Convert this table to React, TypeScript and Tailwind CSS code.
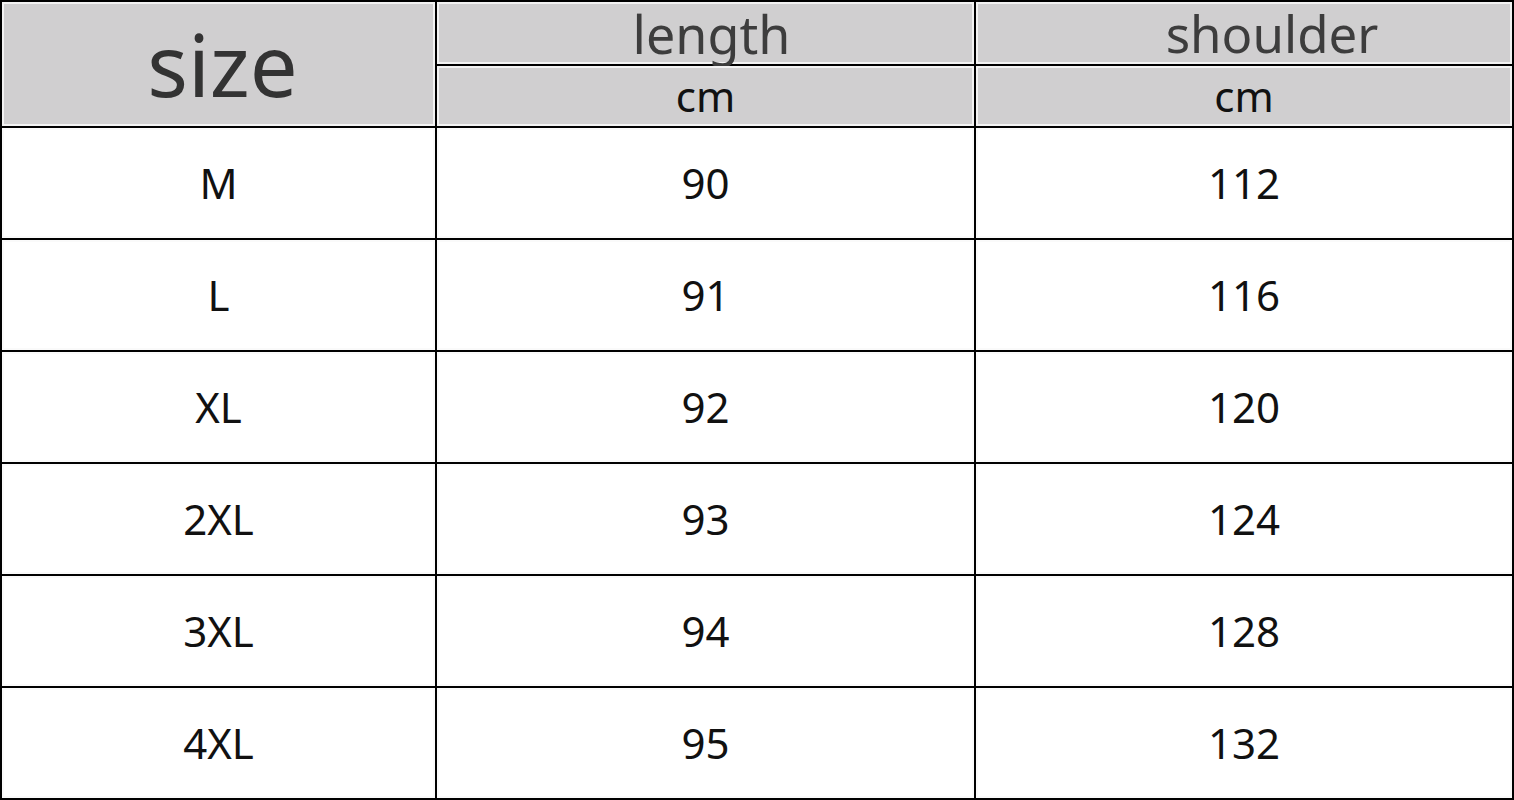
import { Fragment } from "react";

const rows = [
  { size: "M", length: "90", shoulder: "112" },
  { size: "L", length: "91", shoulder: "116" },
  { size: "XL", length: "92", shoulder: "120" },
  { size: "2XL", length: "93", shoulder: "124" },
  { size: "3XL", length: "94", shoulder: "128" },
  { size: "4XL", length: "95", shoulder: "132" },
];

const head = "flex items-center justify-center bg-[#d0cfd0] border-2 border-[#f2f2f2]";
const cell = "flex items-center justify-center bg-white border-2 border-[#fafafa] text-[42px] leading-none text-[#111]";

export default function App() {
  return (
    <div className="w-[1514px] h-[800px] bg-white font-['Noto_Sans',sans-serif]">
      <div className="grid grid-cols-[433px_537px_536px] grid-rows-[62px_60px_repeat(6,110px)] gap-[2px] bg-black p-[2px] h-[800px]">
        {/* header */}
        <div className={`${head} row-span-2 text-[85px] leading-none text-[#333] pl-[8px]`}>
          size
        </div>
        <div className={`${head} text-[52px] leading-none text-[#3d3d3d] pt-[2px] pl-[12px]`}>
          length
        </div>
        <div className={`${head} text-[51px] leading-none text-[#3d3d3d] pl-[56px]`}>
          shoulder
        </div>
        <div className={`${head} text-[42px] leading-none text-[#111]`}>cm</div>
        <div className={`${head} text-[42px] leading-none text-[#111]`}>cm</div>

        {rows.map((r) => (
          <Fragment key={r.size}>
            <div className={cell}>{r.size}</div>
            <div className={cell}>{r.length}</div>
            <div className={cell}>{r.shoulder}</div>
          </Fragment>
        ))}
      </div>
    </div>
  );
}
